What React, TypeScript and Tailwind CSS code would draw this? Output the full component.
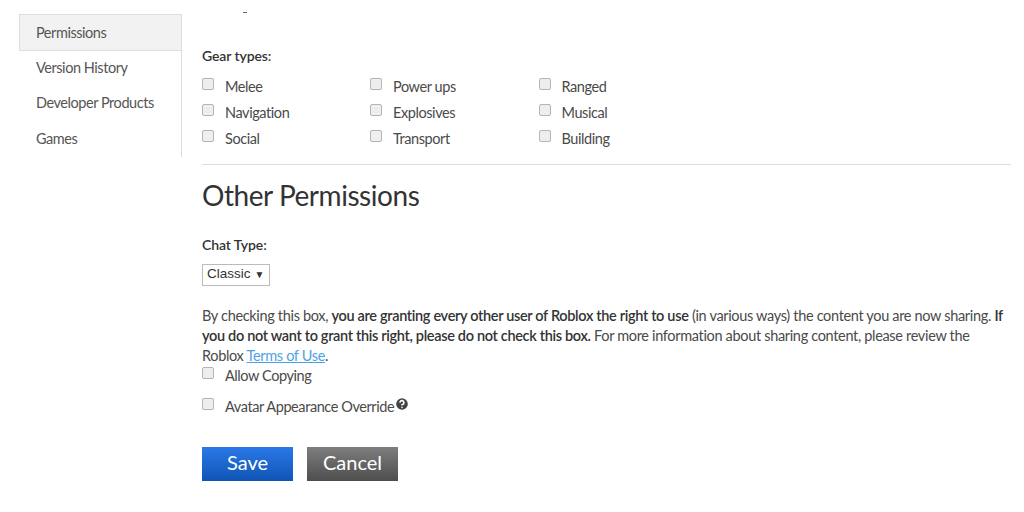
import { CircleHelp } from 'lucide-react';

const font = { fontFamily: 'Lato, sans-serif' };

const gearTypes = [
  ['Melee', 'Power ups', 'Ranged'],
  ['Navigation', 'Explosives', 'Musical'],
  ['Social', 'Transport', 'Building'],
];

function Check({ label }: { label: string }) {
  return (
    <label className="flex items-center h-[26px] text-[14.5px] tracking-[-0.42px] text-[#4a4a4a]">
      <span className="w-[12px] h-[12px] rounded-[2px] border border-[#b5b5b5] bg-[#eeeeee] mr-[11px] -mt-[7px] shrink-0" />
      {label}
    </label>
  );
}

export default function App() {
  return (
    <div className="w-[1024px] h-[512px] bg-white overflow-hidden flex items-start" style={font}>
      <nav className="w-[163px] h-[143px] ml-[19px] mt-[14px] border-r border-[#dddddd] text-[14.5px] tracking-[-0.45px] text-[#555555]">
        <div className="h-[37px] pl-[16px] flex items-center bg-[#f2f2f2] border border-[#dddddd] border-r-0">Permissions</div>
        <div className="h-[34px] pl-[17px] flex items-center">Version History</div>
        <div className="h-[36px] pl-[17px] flex items-center">Developer Products</div>
        <div className="h-[36px] pl-[17px] flex items-center">Games</div>
      </nav>

      <main className="w-[809px] ml-[20px] pt-[12px] text-[#333333]">
        <div className="ml-[41px] w-[4px] h-[1px] bg-[#666666]" />
        <p className="mt-[33px] text-[14px] font-semibold tracking-[-0.1px] leading-[20px] text-[#333333]">Gear types:</p>
        <div className="mt-[8px] grid grid-cols-[168px_168.5px_1fr]">
          {gearTypes.flat().map(g => (
            <Check key={g} label={g} />
          ))}
        </div>
        <hr className="mt-[12px] border-[#dddddd]" />
        <h2 className="mt-[11px] text-[28px] leading-[38px] tracking-[-0.45px] text-[#333333]">Other Permissions</h2>
        <p className="mt-[21px] text-[14px] font-semibold tracking-[-0.1px] leading-[20px] text-[#333333]">Chat Type:</p>
        <div
          className="mt-[9px] w-[68px] h-[22px] pb-[1px] border border-[#bbbbbb] flex items-center pl-[4px] text-[13.5px] text-[#333333]"
          style={{ fontFamily: '"Liberation Sans", sans-serif' }}
        >
          Classic <span className="ml-[4px] text-[10px]">▼</span>
        </div>
        <p className="mt-[20px] text-[14.5px] leading-[20px] tracking-[-0.33px] text-[#4a4a4a]">
          By checking this box, <b className="font-semibold text-[#333333]">you are granting every other user of Roblox the right to use</b> (in various ways) the content you are now sharing. <b className="font-semibold text-[#333333]">If you do not want to grant this right, please do not check this box.</b> For more information about sharing content, please review the Roblox <a className="text-[#4aa3e8] underline">Terms of Use</a>.
        </p>
        <div className="-mt-[3px]">
          <Check label="Allow Copying" />
        </div>
        <div className="mt-[5px] flex">
          <Check label="Avatar Appearance Override" />
          <CircleHelp className="w-[16px] h-[16px] mt-[2px] text-white fill-[#444444]" strokeWidth={2.5} />
        </div>
        <div className="mt-[27px] flex gap-[14px]">
          <button className="w-[91px] h-[34px] pb-[5px] text-[20px] text-white bg-gradient-to-b from-[#2a78e8] to-[#0f55b5]">Save</button>
          <button className="w-[91px] h-[34px] pb-[5px] text-[20px] text-white bg-gradient-to-b from-[#7e7e7e] to-[#4e4e4e]">Cancel</button>
        </div>
      </main>
    </div>
  );
}
